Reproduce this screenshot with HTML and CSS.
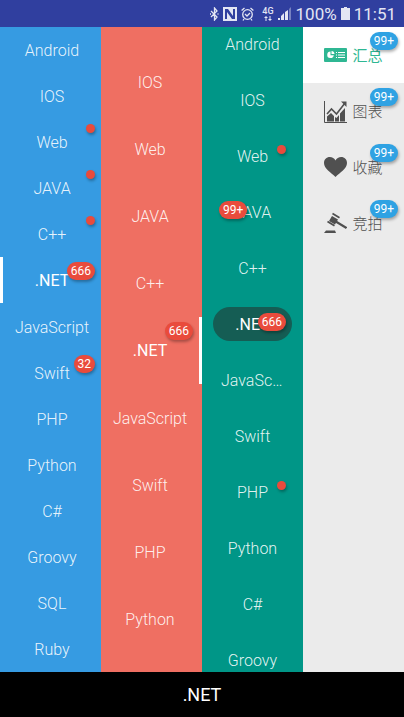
FILE: index.html
```
<!DOCTYPE html>
<html lang="zh-CN">
<head>
<meta charset="utf-8">
<meta name="viewport" content="width=device-width, initial-scale=1">
<title>.NET</title>
<link rel="stylesheet" href="styles.css">
</head>
<body>
<header class="status">
  <svg width="9" height="14" viewBox="0 0 9 14" fill="none" stroke="currentColor" stroke-width="1.300"><path d="M1 4l6 6-2.500 3V1L7 4l-6 6M0 7h1M7.500 7h1"/></svg>
  <svg width="14" height="14" viewBox="0 0 14 14"><path fill="currentColor" fill-rule="evenodd" d="M0 0h14v14H0zM2 2v10h2V5l5 7h3V2h-2v7L5 2z"/></svg>
  <svg class="alarm" width="13" height="14" viewBox="0 0 13 14" fill="none" stroke="currentColor" stroke-width="1.300"><circle cx="6.500" cy="7.500" r="4.800"/><path d="M.6 3.500L3.500 1M12.400 3.500L9.500 1M4 7l2 2 3-3M3 12l-1 1.500M10 12l1 1.500"/></svg>
  <span class="network">4G<svg width="8" height="5" viewBox="0 0 8 5"><path fill="currentColor" d="M0 2l2-2 2 2H2.500v3h-1V2zM4 3l2 2 2-2H6.500V0h-1v3z"/></svg></span>
  <svg width="14" height="13" viewBox="0 0 14 13" fill="currentColor"><path d="M0 11h2v2H0zM3 9l3-3v7H3zM7 5l3-2v10H7z"/><path opacity=".4" d="M11 2l2-2v13h-2z"/></svg>
  <span>100%</span>
  <svg width="9" height="13" viewBox="0 0 9 13"><path fill="currentColor" d="M3 0h3v1h3v12H0V1h3z"/></svg>
  <span>11:51</span>
</header>
<main class="columns">
  <nav class="tabs blue">
    <button class="tab">Android</button>
    <button class="tab">IOS</button>
    <button class="tab">Web<i class="dot"></i></button>
    <button class="tab">JAVA<i class="dot"></i></button>
    <button class="tab">C++<i class="dot"></i></button>
    <button class="tab active">.NET<span class="badge">666</span></button>
    <button class="tab">JavaScript</button>
    <button class="tab">Swift<span class="badge">32</span></button>
    <button class="tab">PHP</button>
    <button class="tab">Python</button>
    <button class="tab">C#</button>
    <button class="tab">Groovy</button>
    <button class="tab">SQL</button>
    <button class="tab">Ruby</button>
  </nav>
  <nav class="tabs coral">
    <button class="tab">IOS</button>
    <button class="tab">Web</button>
    <button class="tab">JAVA</button>
    <button class="tab">C++</button>
    <button class="tab active">.NET<span class="badge">666</span></button>
    <button class="tab">JavaScript</button>
    <button class="tab">Swift</button>
    <button class="tab">PHP</button>
    <button class="tab">Python</button>
  </nav>
  <nav class="tabs teal">
    <button class="tab"><span class="label">Android</span></button>
    <button class="tab"><span class="label">IOS</span></button>
    <button class="tab"><span class="label">Web</span><i class="dot"></i></button>
    <button class="tab"><span class="label">JAVA</span><span class="badge start">99+</span></button>
    <button class="tab"><span class="label">C++</span></button>
    <button class="tab active"><span class="label">.NET</span><span class="badge">666</span></button>
    <button class="tab"><span class="label">JavaScript</span></button>
    <button class="tab"><span class="label">Swift</span></button>
    <button class="tab"><span class="label">PHP</span><i class="dot"></i></button>
    <button class="tab"><span class="label">Python</span></button>
    <button class="tab"><span class="label">C#</span></button>
    <button class="tab"><span class="label">Groovy</span></button>
  </nav>
  <nav class="tabs light">
    <button class="tab active">
      <svg width="23" height="24" viewBox="0 0 23 24"><rect y="4" width="23" height="14" rx="1" fill="currentColor"/><path fill="#fff" d="M6.500 7.500a3.300 3.300 0 1 0 3.300 3.800H6.500z"/><path fill="#fff" d="M7.500 7a3.300 3.300 0 0 1 3 3h-3z"/><path stroke="#fff" d="M12 8.500h1M14 8.500h7M12 11h1M14 11h7M12 13.500h1M14 13.500h7"/></svg>
      汇总<span class="badge">99+</span></button>
    <button class="tab">
      <svg width="23" height="24" viewBox="0 0 23 24"><path fill="none" stroke="currentColor" d="M.5 1v21.500H23"/><path fill="currentColor" d="M3 16.500l4-3.500 3 3v5.500H3zM11 17l1.500 1 2.500-3v6.500h-4zM16 13.500l5-5.500v13.500h-5z"/><path fill="none" stroke="currentColor" stroke-width="1.600" d="M3 14l4.500-5 5 5L21 3"/><path fill="currentColor" d="M17 1.500h5.500V7z"/></svg>
      图表<span class="badge">99+</span></button>
    <button class="tab">
      <svg width="23" height="24" viewBox="0 0 23 24"><path fill="currentColor" d="M11.500 21C7 16.500 0 12.500 0 7c0-3.500 2.500-6 5.800-6 2.400 0 4.700 1.200 5.700 3.600C12.500 2.200 14.800 1 17.200 1 20.500 1 23 3.500 23 7c0 5.500-7 9.500-11.500 14z"/></svg>
      收藏<span class="badge">99+</span></button>
    <button class="tab">
      <svg width="23" height="24" viewBox="0 0 23 24" fill="currentColor"><path d="M8 4l6 3.500-3 5L5 9z"/><path stroke="currentColor" stroke-width="2.200" d="M11 9l11.500 7"/><path stroke="currentColor" stroke-width="1.800" d="M8.500 1.500l7 4.200M3.500 9.500l7 4.200"/><path d="M2 18.500h9l1 2.500H0z"/></svg>
      竞拍<span class="badge">99+</span></button>
  </nav>
</main>
<footer class="footer">.NET</footer>
</body>
</html>
```
FILE: styles.css
```
* {
  box-sizing: border-box;
}

body {
  margin: 0;
  height: 100vh;
  display: flex;
  flex-direction: column;
  background: #000;
  font-family: Roboto, "Noto Sans CJK SC", sans-serif;
  font-size: 16px;
  line-height: 20px;
}

.status {
  flex: none;
  height: 27px;
  padding: 0 8px;
  display: flex;
  align-items: center;
  justify-content: flex-end;
  gap: 4px;
  background: #303f9f;
  color: #e3e5f3;
  font-size: 17px;
}

.network {
  display: flex;
  flex-direction: column;
  align-items: center;
  font-size: 9px;
  font-weight: 500;
  line-height: 9px;
}

.alarm {
  margin-right: 4px;
}

.columns {
  flex: 1;
  min-height: 0;
  display: grid;
  grid-template-columns: repeat(4, 1fr);
  grid-template-rows: minmax(0, 1fr);
}

.tabs {
  display: flex;
  flex-direction: column;
  overflow: hidden;
}

.tab {
  position: relative;
  flex: none;
  height: 56px;
  padding: 2px 0 0;
  border: 0;
  display: flex;
  align-items: center;
  justify-content: center;
  background: none;
  color: rgba(255, 255, 255, 0.9);
  font: inherit;
  font-weight: 300;
}

.active {
  color: #fff;
  font-weight: 400;
}

.badge,
.dot {
  position: absolute;
  top: 5px;
  right: 6px;
  background: #e94b3c;
  box-shadow: 1px 2px 3px rgba(0, 0, 0, 0.3);
}

.dot {
  width: 9px;
  height: 9px;
  border-radius: 50%;
}

.badge {
  padding: 0 4px;
  border-radius: 9px;
  color: #fff;
  font-size: 12px;
  font-weight: 400;
  line-height: 18px;
}

.blue {
  background: #369be2;
}

.blue .tab {
  flex: 1;
  border-left: 3px solid transparent;
}

.blue .active {
  border-left-color: #fff;
}

.coral {
  padding: 21px 0 19px;
  background: #ef6f62;
}

.coral .tab {
  flex: 1;
  border-right: 3px solid transparent;
}

.coral .active {
  border-right-color: #fff;
}

.teal {
  background: #009687;
}

.teal .tab {
  padding: 0 11px;
}

.teal .tab:first-child {
  margin-top: -11px;
}

.teal .label {
  flex: 1;
  padding: 1px 8px 0;
  border-radius: 17px;
  line-height: 33px;
  overflow: hidden;
  text-overflow: ellipsis;
  white-space: nowrap;
}

.teal .active .label {
  background: #155d54;
}

.teal .badge,
.teal .dot {
  top: 17px;
  right: 17px;
}

.teal .start {
  right: auto;
  left: 17px;
}

.light {
  background: #ebebeb;
}

.light .tab {
  gap: 5px;
  color: #505050;
  font-size: 15px;
}

.light .active {
  background: #fff;
  color: #2fb793;
}

.light .badge {
  background: #2fa2e3;
}

.footer {
  flex: none;
  height: 45px;
  display: flex;
  align-items: center;
  justify-content: center;
  color: #fff;
  font-size: 18px;
}
```
